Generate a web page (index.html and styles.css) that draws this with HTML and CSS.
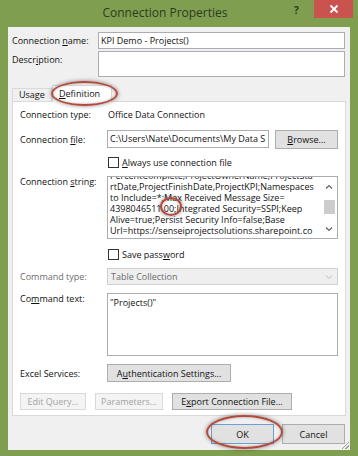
FILE: index.html
```html
<!DOCTYPE html>
<html lang="en">
<head>
  <meta charset="UTF-8">
  <title>Connection Properties</title>
  <link rel="stylesheet" href="styles.css">
</head>
<body>
<div class="window">
  <!--标题栏-->
  <div class="titlebar">
    <span class="title">Connection Properties</span>
    <span class="help">?</span>
    <span class="close">
      <svg width="10" height="10" viewBox="0 0 10 10"><path d="M1.5 1.5 L8.5 8.5 M8.5 1.5 L1.5 8.5" stroke="#fff" stroke-width="1.8"/></svg>
    </span>
  </div>

  <div class="client">
    <div class="row-top">
      <label class="lbl">Connection <u>n</u>ame:</label>
      <div class="field name-field">KPI Demo - Projects()</div>
    </div>
    <div class="row-top desc-row">
      <label class="lbl">Descr<u>i</u>ption:</label>
      <div class="field desc-field"></div>
    </div>

    <!--选项卡-->
    <div class="tabs">
      <span class="tab">Usa<u>g</u>e</span>
      <span class="tab current"><u>D</u>efinition</span>
    </div>

    <div class="panel">
      <div class="prow r-type">
        <span class="plbl">Connection type:</span>
        <span class="value">Office Data Connection</span>
      </div>
      <div class="prow r-file">
        <span class="plbl">Connection <u>f</u>ile:</span>
        <div class="field file-field"><span class="clip">C:\Users\Nate\Documents\My Data S</span></div>
        <span class="btn browse"><u>B</u>rowse...</span>
      </div>
      <div class="prow r-check">
        <span class="plbl"></span>
        <span class="check"></span>
        <span><u>A</u>lways use connection file</span>
      </div>
      <div class="prow r-string">
        <span class="plbl top">Connection <u>s</u>tring:</span>
        <div class="field string-field">
          <div class="string-text">
            <div>PercentComplete,ProjectOwnerName,ProjectSta</div>
            <div>rtDate,ProjectFinishDate,ProjectKPI;Namespaces</div>
            <div>to Include=*;Max Received Message Size=</div>
            <div>4398046511 00;Integrated Security=SSPI;Keep</div>
            <div>Alive=true;Persist Security Info=false;Base</div>
            <div>Url=https://senseiprojectsolutions.sharepoint.co</div>
          </div>
          <div class="scrollbar">
            <svg class="arrow" width="8" height="6" viewBox="0 0 8 6"><path d="M1 4.5 L4 1.5 L7 4.5" fill="none" stroke="#606060" stroke-width="1.2"/></svg>
            <span class="thumb"></span>
            <svg class="arrow" width="8" height="6" viewBox="0 0 8 6"><path d="M1 1.5 L4 4.5 L7 1.5" fill="none" stroke="#606060" stroke-width="1.2"/></svg>
          </div>
        </div>
      </div>
      <div class="prow r-check r-save">
        <span class="plbl"></span>
        <span class="check"></span>
        <span>Save pass<u>w</u>ord</span>
      </div>
      <div class="prow r-ctype">
        <span class="plbl dim">Command type:</span>
        <div class="field select-field">
          <span>Table Collection</span>
          <svg width="8" height="6" viewBox="0 0 8 6"><path d="M1 1.5 L4 4.5 L7 1.5" fill="none" stroke="#b8b8b8" stroke-width="1"/></svg>
        </div>
      </div>
      <div class="prow r-ctext">
        <span class="plbl top">Co<u>m</u>mand text:</span>
        <div class="field ctext-field">"Projects()"</div>
      </div>
      <div class="prow r-excel">
        <span class="plbl">Excel Services:</span>
        <span class="btn auth">A<u>u</u>thentication Settings...</span>
      </div>
      <div class="prow r-actions">
        <span class="btn disabled edit">Edit Query...</span>
        <span class="btn disabled params">Parameters...</span>
        <span class="btn export">E<u>x</u>port Connection File...</span>
      </div>
    </div>

    <div class="footer">
      <span class="btn ok">OK</span>
      <span class="btn cancel">Cancel</span>
    </div>

    <span class="grip"></span>
  </div>

  <!--红圈标注-->
  <span class="mark mark-tab"></span>
  <span class="mark mark-zero"></span>
  <span class="mark mark-ok"></span>
</div>
</body>
</html>
```

FILE: styles.css
```css
* {
  margin: 0;
  padding: 0;
  box-sizing: border-box;
}

body {
  background: #7f9e4f;
  font-family: "Open Sans", "Noto Sans", sans-serif;
  font-size: 9px;
  color: #111;
}

u {
  text-decoration: underline;
  text-underline-offset: 1px;
}

.window {
  width: 358px;
  height: 456px;
  position: relative;
  background: #7f9e4f;
}

.titlebar {
  height: 27px;
  display: flex;
  align-items: flex-start;
}

.title {
  flex: 1;
  text-align: center;
  font-size: 12px;
  line-height: 26px;
  padding-left: 36px;
  color: #2e3a22;
}

.help {
  width: 14px;
  font-size: 10px;
  font-weight: bold;
  line-height: 20px;
  color: #2e3a22;
  margin-right: 6px;
}

.close {
  width: 39px;
  height: 18px;
  margin-right: 5px;
  background: #c9534f;
  display: flex;
  align-items: center;
  justify-content: center;
}

.client {
  margin: 0 8px;
  height: 423px;
  background: #f0f0f0;
  padding: 5px 4px 0 4px;
  position: relative;
}

.row-top {
  display: flex;
  padding-right: 1px;
}

.desc-row {
  margin-top: 2px;
}

.lbl {
  width: 86px;
  line-height: 17px;
}

.field {
  background: #fff;
  border: 1px solid #abadb3;
  overflow: hidden;
  white-space: nowrap;
}

.name-field {
  flex: 1;
  height: 17px;
  line-height: 15px;
  padding-left: 2px;
}

.desc-field {
  flex: 1;
  height: 26px;
}

.tabs {
  display: flex;
  align-items: flex-end;
  margin-top: 8px;
  height: 16px;
  position: relative;
  z-index: 1;
}

.tab {
  height: 13px;
  line-height: 12px;
  padding: 0 6px;
  border: 1px solid #d9d9d9;
  border-bottom: none;
  background: #f0f0f0;
  width: 40px;
}

.tab.current {
  line-height: 15px;
  width: 60px;
  background: #fff;
  margin-bottom: -1px;
  height: 17px;
}

.panel {
  height: 315px;
  background: #fff;
  border: 1px solid #d9d9d9;
  padding: 0 7px;
}

.prow {
  display: flex;
  align-items: center;
}

.plbl {
  width: 87px;
  flex-shrink: 0;
}

.plbl.top {
  align-self: flex-start;
  margin-top: -1px;
}

.plbl.dim {
  color: #6d6d6d;
}

.value {
  padding-left: 1px;
}

.r-type {
  margin-top: 5px;
  height: 14px;
}

.r-file {
  margin-top: 9px;
  height: 18px;
}

.file-field {
  width: 162px;
  height: 18px;
  line-height: 16px;
  padding-left: 2px;
}

.clip {
  display: block;
  overflow: hidden;
}

.btn {
  display: flex;
  align-items: center;
  justify-content: center;
  background: #e1e1e1;
  border: 1px solid #adadad;
  white-space: nowrap;
}

.browse {
  width: 63px;
  height: 19px;
  margin-left: 6px;
}

.r-check {
  margin-top: 8px;
  height: 12px;
}

.check {
  width: 11px;
  height: 11px;
  border: 1px solid #333;
  background: #fff;
  margin-left: 1px;
  margin-right: 3px;
}

.r-string {
  margin-top: 8px;
  height: 63px;
  align-items: stretch;
}

.string-field {
  flex: 1;
  height: 63px;
  display: flex;
}

.string-text {
  flex: 1;
  overflow: hidden;
  padding-left: 2px;
  margin-top: -7px;
  line-height: 11px;
}

.scrollbar {
  width: 14px;
  margin: 2px 1px 1px 0;
  display: flex;
  flex-direction: column;
  align-items: center;
}

.scrollbar .arrow {
  margin: 5px 0;
}

.thumb {
  width: 11px;
  height: 14px;
  background: #cdcdcd;
  margin: 5px 0 auto;
}

.r-save {
  margin-top: 9px;
}

.r-ctype {
  margin-top: 8px;
  height: 17px;
}

.select-field {
  flex: 1;
  height: 17px;
  background: #efefef;
  border-color: #d0d0d0;
  color: #6d6d6d;
  display: flex;
  align-items: center;
  justify-content: space-between;
  padding: 0 4px 0 3px;
}

.r-ctext {
  margin-top: 8px;
  height: 63px;
  align-items: stretch;
}

.ctext-field {
  flex: 1;
  padding: 2px 0 0 2px;
}

.r-excel {
  margin-top: 8px;
  height: 18px;
}

.auth {
  width: 124px;
  height: 18px;
}

.r-actions {
  margin-top: 11px;
  height: 17px;
  gap: 9px;
}

.r-actions .btn {
  height: 17px;
}

.edit {
  width: 66px;
}

.params {
  width: 68px;
}

.export {
  width: 120px;
}

.btn.disabled {
  background: #f4f4f4;
  border-color: #d9d9d9;
  color: #a3a3a3;
}

.footer {
  display: flex;
  justify-content: flex-end;
  gap: 8px;
  margin-top: 8px;
  padding-right: 1px;
}

.footer .btn {
  width: 63px;
  height: 20px;
}

.ok {
  border-color: #6f9fd2;
}

.grip {
  position: absolute;
  right: 1px;
  bottom: 1px;
  width: 7px;
  height: 7px;
  background: linear-gradient(135deg, transparent 45%, #a0a0a0 45%, #a0a0a0 55%, transparent 55%, transparent 70%, #a0a0a0 70%, #a0a0a0 80%, transparent 80%);
}

.mark {
  position: absolute;
  border: 2.5px solid #b44a3c;
  border-radius: 50%;
  box-shadow: 0 0 4px rgba(0, 0, 0, .45), inset 0 0 3px rgba(0, 0, 0, .3);
  z-index: 5;
}

.mark-tab {
  left: 51px;
  top: 81px;
  width: 67px;
  height: 25px;
}

.mark-zero {
  left: 160px;
  top: 197px;
  width: 22px;
  height: 19px;
}

.mark-ok {
  left: 206px;
  top: 415px;
  width: 77px;
  height: 34px;
}
```
